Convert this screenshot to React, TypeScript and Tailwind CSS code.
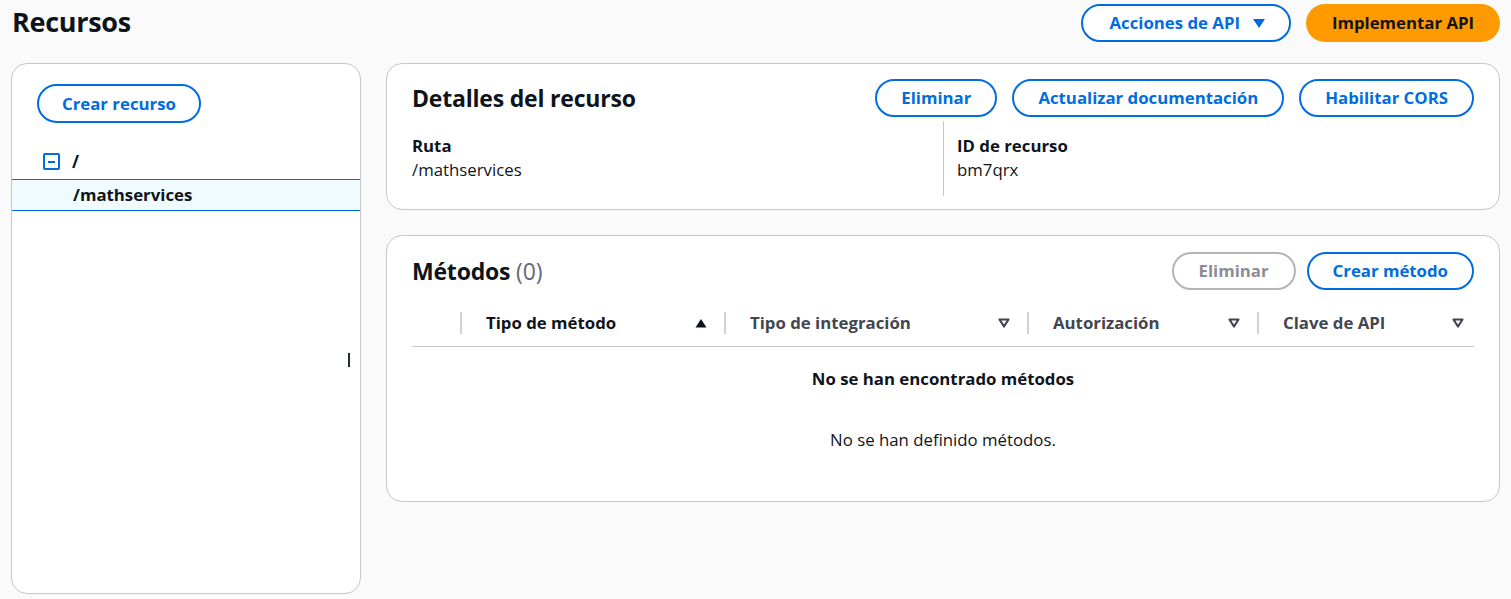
import React from "react";

const font = { fontFamily: '"Open Sans", "Noto Sans", Arial, sans-serif' };

const OutlineBtn = ({ children, disabled = false }: { children: React.ReactNode; disabled?: boolean }) => (
  <button
    className={
      disabled
        ? "h-[38px] px-[25px] rounded-full border-2 border-[#b4b4bb] text-[#8c8c94] text-[16.8px] font-bold bg-white"
        : "h-[38px] px-[24px] rounded-full border-2 border-[#006ce0] text-[#006ce0] text-[16.8px] font-bold bg-white"
    }
  >
    {children}
  </button>
);

const SortUp = () => (
  <svg width="14" height="12" viewBox="0 0 14 12">
    <path d="M7 2 L12.5 10.5 L1.5 10.5 Z" fill="#0f141a" />
  </svg>
);

const SortDown = () => (
  <svg width="14" height="12" viewBox="0 0 14 12">
    <path d="M2.5 2.5 L11.5 2.5 L7 9.5 Z" fill="none" stroke="#424650" strokeWidth="2.2" strokeLinejoin="round" />
  </svg>
);

const HeadCell = ({ label, sorted = false, last = false }: { label: string; sorted?: boolean; last?: boolean }) => (
  <div className="flex items-center h-[46px]">
    <div className="w-[2px] h-[22px] bg-[#d1d1d6]" />
    <div className={last ? "flex-1 flex items-center justify-between pl-[24px] pr-[9px]" : "flex-1 flex items-center justify-between pl-[24px] pr-[16px]"}>
      <span className={sorted ? "text-[16.8px] font-bold text-[#0f141a]" : "text-[16.8px] font-bold text-[#424650]"}>{label}</span>
      {sorted ? <SortUp /> : <SortDown />}
    </div>
  </div>
);

export default function App() {
  return (
    <div className="min-h-screen bg-[#fafafa] px-[11px] text-[#0f141a]" style={font}>
      {/* header */}
      <div className="flex items-center justify-between h-[45px]">
        <h1 className="text-[27px] font-bold tracking-[-0.3px] pl-[1px]">Recursos</h1>
        <div className="flex items-center gap-[15px]">
          <button className="h-[38px] pl-[26px] pr-[23px] rounded-full border-2 border-[#006ce0] text-[#006ce0] text-[16.8px] font-bold bg-white flex items-center gap-[12px]">
            Acciones de API
            <svg width="14" height="12" viewBox="0 0 14 12">
              <path d="M1 2 L13 2 L7 11 Z" fill="#006ce0" />
            </svg>
          </button>
          <button className="h-[38px] w-[194px] rounded-full bg-[#ff9900] text-[#0f141a] text-[16.8px] font-bold">
            Implementar API
          </button>
        </div>
      </div>

      <div className="flex gap-[25px] mt-[18px]">
        {/* left tree panel */}
        <div className="w-[350px] h-[531px] shrink-0 bg-white border border-[#c6c6cd] rounded-[16px] pt-[20px] relative">
          <div className="pl-[25px]">
            <button className="h-[39px] px-[23px] rounded-full border-2 border-[#006ce0] text-[#006ce0] text-[16.8px] font-bold bg-white">
              Crear recurso
            </button>
          </div>
          <div className="mt-[24px]">
            <div className="flex items-center h-[32px] pl-[31px] gap-[12px] pb-[3px]">
              <div className="w-[17px] h-[17px] border-2 border-[#006ce0] rounded-[2px] flex items-center justify-center">
                <div className="w-[7px] h-[2px] bg-[#006ce0]" />
              </div>
              <span className="text-[17px] font-bold">/</span>
            </div>
            <div className="h-[32px] flex items-center pl-[61px] bg-[#f0fbff] border-y border-[#006ce0]">
              <span className="text-[16.8px] font-bold">/mathservices</span>
            </div>
          </div>
          <div className="absolute right-[10px] top-[289px] w-[2px] h-[14px] bg-[#232b37]" />
        </div>

        {/* right column */}
        <div className="flex-1 flex flex-col gap-[25px]">
          <div className="h-[147px] bg-white border border-[#c6c6cd] rounded-[16px] pl-[25px] pr-[25px] pt-[15px]">
            <div className="flex items-center justify-between">
              <h2 className="text-[23px] font-bold tracking-[-0.2px]">Detalles del recurso</h2>
              <div className="flex gap-[15px]">
                <OutlineBtn>Eliminar</OutlineBtn>
                <OutlineBtn>Actualizar documentación</OutlineBtn>
                <OutlineBtn>Habilitar CORS</OutlineBtn>
              </div>
            </div>
            <div className="grid grid-cols-2 mt-[4px]">
              <div className="pt-[13px] pb-[14px]">
                <div className="text-[16.8px] font-bold leading-[24px]">Ruta</div>
                <div className="text-[16.8px] leading-[24px]">/mathservices</div>
              </div>
              <div className="border-l border-[#c6c6cd] pl-[13px] pt-[13px] pb-[14px]">
                <div className="text-[16.8px] font-bold leading-[24px]">ID de recurso</div>
                <div className="text-[16.8px] leading-[24px]">bm7qrx</div>
              </div>
            </div>
          </div>

          <div className="h-[267px] bg-white border border-[#c6c6cd] rounded-[16px] pl-[25px] pr-[25px] pt-[16px]">
            <div className="flex items-center justify-between">
              <h2 className="text-[23px] font-bold tracking-[-0.2px]">
                Métodos <span className="font-normal text-[#656871]">(0)</span>
              </h2>
              <div className="flex gap-[11px]">
                <OutlineBtn disabled>Eliminar</OutlineBtn>
                <OutlineBtn>Crear método</OutlineBtn>
              </div>
            </div>
            <div className="mt-[10px] grid grid-cols-[48px_264px_303px_230px_1fr] border-b border-[#c6c6cd]">
              <div />
              <HeadCell label="Tipo de método" sorted />
              <HeadCell label="Tipo de integración" />
              <HeadCell label="Autorización" />
              <HeadCell label="Clave de API" last />
            </div>
            <div className="text-center pt-[20px]">
              <div className="text-[16.8px] font-bold leading-[24px]">No se han encontrado métodos</div>
              <div className="text-[16.8px] leading-[24px] mt-[37px]">No se han definido métodos.</div>
            </div>
          </div>
        </div>
      </div>
    </div>
  );
}
